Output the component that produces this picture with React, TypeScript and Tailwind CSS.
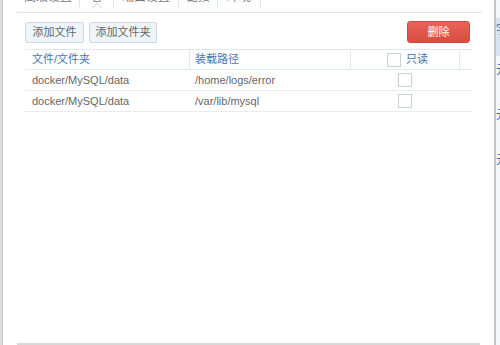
import React from "react";

const font = { fontFamily: '"Liberation Sans", "Noto Sans CJK SC", sans-serif' };

function Tab({ label, w, active }: { label: string; w: number; active?: boolean }) {
  return (
    <div className="relative flex h-full shrink-0 items-start justify-center" style={{ width: w }}>
      <span className="mt-[-9px] text-[12px] leading-[12px] text-[#777]">{label}</span>
      {active && (
        <div className="absolute bottom-[-4px] left-1/2 h-[7px] w-[7px] -translate-x-1/2 rotate-45 border-l border-t border-[#d6dde5] bg-white" />
      )}
    </div>
  );
}

function Check() {
  return <div className="h-[14px] w-[14px] border border-[#c9d0d8] bg-white" />;
}

export default function App() {
  const rows = [
    ["docker/MySQL/data", "/home/logs/error"],
    ["docker/MySQL/data", "/var/lib/mysql"],
  ];
  return (
    <div className="flex h-[345px] w-[500px] overflow-hidden bg-white" style={font}>
      <div className="w-[3px] shrink-0 border-r border-[#c8c8c8] bg-[#dedede]" />
      <div className="flex w-[491px] shrink-0 flex-col">
        {/* tabs */}
        <div className="ml-[14px] mr-[12px] flex h-[13px] items-stretch border-b border-[#dde3ea]">
          <div className="flex h-[7px] items-stretch">
            <Tab label="高级设置" w={62} />
            <div className="w-px bg-[#dde3ea]" />
            <Tab label="卷" w={33} active />
            <div className="w-px bg-[#dde3ea]" />
            <Tab label="端口设置" w={64} />
            <div className="w-px bg-[#dde3ea]" />
            <Tab label="链接" w={38} />
            <div className="w-px bg-[#dde3ea]" />
            <Tab label="环境" w={42} />
            <div className="w-px bg-[#dde3ea]" />
          </div>
        </div>
        {/* toolbar */}
        <div className="ml-[22px] mr-[24px] mt-[8px] flex items-center">
          <button className="flex h-[21px] w-[59px] items-center justify-center rounded-[2px] border border-[#cfd8e2] bg-[#eff4f9] text-[11px] text-[#666]">
            添加文件
          </button>
          <button className="ml-[5px] flex h-[21px] w-[68px] items-center justify-center rounded-[2px] border border-[#cfd8e2] bg-[#eff4f9] text-[11px] text-[#666]">
            添加文件夹
          </button>
          <div className="flex-1" />
          <button className="flex h-[22px] w-[63px] items-center justify-center rounded-[3px] border border-[#cf4a3e] bg-gradient-to-b from-[#e8645a] to-[#d94c40] text-[11px] text-white">
            删除
          </button>
        </div>
        {/* table */}
        <div className="ml-[22px] mr-[22px] mt-[6px] border-t border-[#e2e8ef] text-[11px]">
          <div className="flex h-[20px] items-stretch border-b border-[#e2e8ef] text-[#4674b3]">
            <div className="flex w-[164px] items-center pl-[7px]">文件/文件夹</div>
            <div className="flex w-[161px] items-center border-l border-[#e2e8ef] pl-[5px]">装载路径</div>
            <div className="flex w-[109px] items-center border-l border-[#e2e8ef] pl-[36px]">
              <Check />
              <span className="ml-[5px]">只读</span>
            </div>
            <div className="flex-1 border-l border-[#e2e8ef]" />
          </div>
          {rows.map((r, i) => (
            <div key={i} className="flex h-[21px] items-center border-b border-[#e8ecf1] text-[#666]">
              <div className="w-[164px] pl-[7px]">{r[0]}</div>
              <div className="w-[161px] pl-[6px]">{r[1]}</div>
              <div className="flex w-[109px] pl-[48px]">
                <Check />
              </div>
            </div>
          ))}
        </div>
        <div className="flex-1" />
        <div className="ml-[14px] mr-[14px] h-[2px] bg-[#d8d8d8]" />
      </div>
      <div className="w-[2px] shrink-0 bg-[#c4c4c4]" />
      <div className="flex w-[4px] shrink-0 flex-col overflow-hidden bg-[#f4f6f9] text-[12px] text-[#3a6aa8]">
        <div className="mt-[18px] flex h-[38px] items-start bg-[#d6e3f1] pt-[6px] leading-[12px]">字</div>
        <div className="mt-[8px] h-[45px] leading-[12px]">元</div>
        <div className="h-[45px] leading-[12px]">元</div>
        <div className="h-[45px] leading-[12px]">元</div>
      </div>
    </div>
  );
}
